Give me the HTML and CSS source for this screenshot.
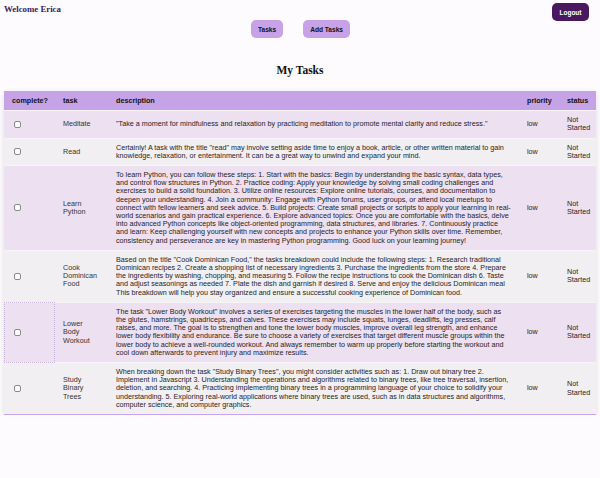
FILE: index.html
```html
<!DOCTYPE html>
<html>
<head>
<meta charset="utf-8">
<link rel="stylesheet" href="styles.css">
</head>
<body>
<header class="topbar">
  <div class="welcome">Welcome Erica</div>
  <button class="logout">Logout</button>
</header>
<nav class="nav">
  <button class="nav-btn">Tasks</button>
  <button class="nav-btn">Add Tasks</button>
</nav>
<h2 class="title">My Tasks</h2>
<table class="tasks">
  <colgroup>
    <col class="c-check"><col class="c-task"><col class="c-desc"><col class="c-pri"><col class="c-status">
  </colgroup>
  <thead>
    <tr><th>complete?</th><th>task</th><th>description</th><th>priority</th><th>status</th></tr>
  </thead>
  <tbody>
    <tr>
      <td><input type="checkbox" class="cb"></td>
      <td class="task">Meditate</td>
      <td>"Take a moment for mindfulness and relaxation by practicing meditation to promote mental clarity and reduce stress."</td>
      <td>low</td>
      <td>Not Started</td>
    </tr>
    <tr>
      <td><input type="checkbox" class="cb"></td>
      <td class="task">Read</td>
      <td>Certainly! A task with the title "read" may involve setting aside time to enjoy a book, article, or other written material to gain knowledge, relaxation, or entertainment. It can be a great way to unwind and expand your mind.</td>
      <td>low</td>
      <td>Not Started</td>
    </tr>
    <tr>
      <td><input type="checkbox" class="cb"></td>
      <td class="task">Learn Python</td>
      <td>To learn Python, you can follow these steps: 1. Start with the basics: Begin by understanding the basic syntax, data types, and control flow structures in Python. 2. Practice coding: Apply your knowledge by solving small coding challenges and exercises to build a solid foundation. 3. Utilize online resources: Explore online tutorials, courses, and documentation to deepen your understanding. 4. Join a community: Engage with Python forums, user groups, or attend local meetups to connect with fellow learners and seek advice. 5. Build projects: Create small projects or scripts to apply your learning in real-world scenarios and gain practical experience. 6. Explore advanced topics: Once you are comfortable with the basics, delve into advanced Python concepts like object-oriented programming, data structures, and libraries. 7. Continuously practice and learn: Keep challenging yourself with new concepts and projects to enhance your Python skills over time. Remember, consistency and perseverance are key in mastering Python programming. Good luck on your learning journey!</td>
      <td>low</td>
      <td>Not Started</td>
    </tr>
    <tr>
      <td><input type="checkbox" class="cb"></td>
      <td class="task">Cook Dominican Food</td>
      <td>Based on the title "Cook Dominican Food," the tasks breakdown could include the following steps: 1. Research traditional Dominican recipes 2. Create a shopping list of necessary ingredients 3. Purchase the ingredients from the store 4. Prepare the ingredients by washing, chopping, and measuring 5. Follow the recipe instructions to cook the Dominican dish 6. Taste and adjust seasonings as needed 7. Plate the dish and garnish if desired 8. Serve and enjoy the delicious Dominican meal This breakdown will help you stay organized and ensure a successful cooking experience of Dominican food.</td>
      <td>low</td>
      <td>Not Started</td>
    </tr>
    <tr>
      <td class="focused"><input type="checkbox" class="cb"></td>
      <td class="task">Lower Body Workout</td>
      <td>The task "Lower Body Workout" involves a series of exercises targeting the muscles in the lower half of the body, such as the glutes, hamstrings, quadriceps, and calves. These exercises may include squats, lunges, deadlifts, leg presses, calf raises, and more. The goal is to strengthen and tone the lower body muscles, improve overall leg strength, and enhance lower body flexibility and endurance. Be sure to choose a variety of exercises that target different muscle groups within the lower body to achieve a well-rounded workout. And always remember to warm up properly before starting the workout and cool down afterwards to prevent injury and maximize results.</td>
      <td>low</td>
      <td>Not Started</td>
    </tr>
    <tr>
      <td><input type="checkbox" class="cb"></td>
      <td class="task">Study Binary Trees</td>
      <td>When breaking down the task "Study Binary Trees", you might consider activities such as: 1. Draw out binary tree 2. Implement in Javascript 3. Understanding the operations and algorithms related to binary trees, like tree traversal, insertion, deletion, and searching. 4. Practicing implementing binary trees in a programming language of your choice to solidify your understanding. 5. Exploring real-world applications where binary trees are used, such as in data structures and algorithms, computer science, and computer graphics.</td>
      <td>low</td>
      <td>Not Started</td>
    </tr>
  </tbody>
</table>
</body>
</html>
```
FILE: styles.css
```css
html, body {
  margin: 0;
  background: #fdfbfe;
}
body {
  padding: 0 4px;
  font-family: "Liberation Sans", Arial, sans-serif;
}
.topbar {
  display: flex;
  justify-content: space-between;
  align-items: flex-start;
  padding-top: 3px;
}
.welcome {
  font-family: "Liberation Serif", "Times New Roman", serif;
  font-weight: bold;
  font-size: 8.8px;
  color: #3a1958;
  line-height: 10px;
  padding-top: 1px;
}
.logout {
  margin-right: 7px;
  width: 37px;
  height: 18px;
  border: none;
  border-radius: 5px;
  background: #4a1861;
  color: #fff;
  font-family: "Liberation Sans", Arial, sans-serif;
  font-weight: bold;
  font-size: 6.5px;
  padding: 0;
}
.nav {
  display: flex;
  justify-content: center;
  gap: 20px;
  margin-top: -1px;
  padding-left: 1px;
}
.nav-btn {
  height: 18px;
  padding: 0 7px;
  border: none;
  border-radius: 5px;
  background: #c7a2e6;
  color: #111;
  font-family: "Liberation Sans", Arial, sans-serif;
  font-weight: bold;
  font-size: 6.6px;
}
.title {
  margin: 25px 0 0;
  text-align: center;
  font-family: "Liberation Serif", "Times New Roman", serif;
  font-size: 11.5px;
  line-height: 14px;
  color: #111;
}
.tasks {
  margin-top: 14px;
  width: 592px;
  table-layout: fixed;
  border-collapse: collapse;
  font-size: 7.2px;
  line-height: 8.2px;
  color: #1e1e1e;
  box-shadow: 0 2px 6px rgba(0, 0, 0, 0.12);
  border-bottom: 1px solid #c7a5e8;
}
.c-check { width: 51px; }
.c-task { width: 53px; }
.c-desc { width: 411px; }
.c-pri { width: 40px; }
.c-status { width: 37px; }
.tasks th {
  background: #c5a3e6;
  text-align: left;
  font-weight: bold;
  color: #111;
  padding: 6px 8px 5px;
}
.tasks td {
  padding: 5px 8px;
  vertical-align: middle;
  border-top: 1px solid #f6f4f7;
}
.tasks td.task {
  color: #333;
  padding-right: 10px;
}
.tasks tbody tr:nth-child(odd) { background: #ede0f0; }
.tasks tbody tr:nth-child(even) { background: #f1eff2; }
.focused {
  outline: 1px dotted #c9b6dd;
  outline-offset: -1px;
}
.cb {
  appearance: none;
  -webkit-appearance: none;
  display: block;
  margin: 0 0 0 2px;
  width: 7px;
  height: 7px;
  border: 1px solid #8a8a8a;
  border-radius: 2px;
  background: #fff;
}
```
